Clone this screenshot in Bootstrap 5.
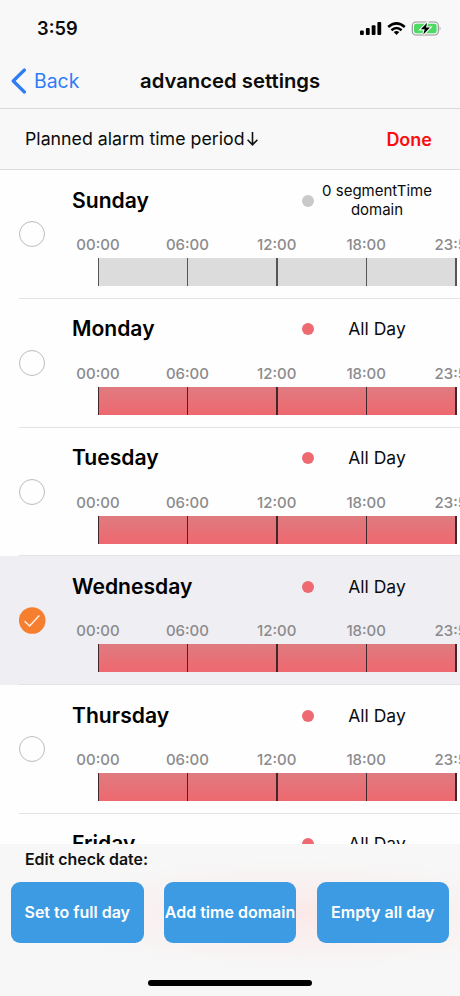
<!DOCTYPE html>
<html lang="en">
<head>
<meta charset="utf-8">
<meta name="viewport" content="width=device-width, initial-scale=1">
<title>advanced settings</title>
<link href="https://cdn.jsdelivr.net/npm/bootstrap@5.3.0/dist/css/bootstrap.min.css" rel="stylesheet">
<style>
  body { font-family: Inter, "Liberation Sans", sans-serif; color: #0b0b0b; background: #fefefe; }
  .screen { width: 460px; height: 996px; }
  .bar-bg { background: #f8f8f8; }
  .status { height: 56px; padding: 0 19px 0 37px; }
  .clock { font-size: 18.3px; font-weight: 600; line-height: 22px; }
  .titlebar { height: 53px; padding-bottom: 1px; border-bottom: 1px solid #d9d9d9; padding-left: 11px; }
  .back { width: 129px; gap: 7px; font-size: 19.4px; color: #2f7cf6; }
  .page-title { font-size: 20.3px; font-weight: 600; }
  .subbar { height: 61px; border-bottom: 1px solid #dcdcdc; padding: 0 28px 0 25px; font-size: 17.75px; }
  .done { color: #fb0d0d; font-weight: 600; font-size: 18px; }
  .day { height: 128.75px; }
  .day.picked { background-color: #efeef3; }
  .check-col { width: 72px; padding-left: 19px; }
  .ring { width: 26px; height: 26px; border: 1px solid #bcbcbc; }
  .day-wrap { background: linear-gradient(#e3e3e5, #e3e3e5) 19px 100% / 100% 1px no-repeat; }
  .head { height: 62px; padding-bottom: 1px; }
  .day-name { width: 230px; font-size: 21.1px; font-weight: 600; color: #000; }
  .dot { width: 12px; height: 12px; background: #ec6a70; }
  .dot.off { background: #c9c9c9; }
  .state { width: 126px; font-size: 17.5px; line-height: 22px; }
  .state.long { font-size: 15px; line-height: 18.5px; }
  .hours { height: 26px; margin-left: -18.7px; font-size: 15px; font-weight: 500; color: #8b8b8d; line-height: 26px; }
  .hours span { width: 89.4px; }
  .track { width: 359px; height: 28px; margin-left: 25.5px; background: linear-gradient(#df7b80, #ee686f); }
  .track.off { background: #dcdcdc; }
  .track i { width: 1.5px; background: #40272b; }
  .track.off i { background: #555; }
  .tools { height: 152px; background:
      radial-gradient(ellipse 260px 55px at 300px 70px, #fbe9e9, rgba(251,236,236,0)), #f7f7f7; }
  .tools-label { height: 38px; padding: 5px 0 0 25px; font-size: 15.9px; font-weight: 600; line-height: 22px; color: #111; }
  .tool-row { padding: 0 11px; }
  .tool { width: 132.5px; height: 61px; border-radius: 9px; background: #3c9be3; color: #fff; font-size: 16px; font-weight: 600; }
  .tool span { display: block; margin-top: -1px; }
  .home { width: 164px; height: 6px; background: #000; margin-top: 37px; }
</style>
</head>
<body>
<div class="screen d-flex flex-column overflow-hidden">
  <header class="bar-bg flex-shrink-0">
    <div class="status d-flex align-items-center justify-content-between">
      <div class="clock">3:59</div>
      <svg width="84" height="20" viewBox="0 0 84 20">
        <g fill="#000"><rect x="3" y="12.5" width="3.8" height="4.5" rx="1"/><rect x="8.9" y="10" width="3.8" height="7" rx="1"/><rect x="14.7" y="7.3" width="3.8" height="9.7" rx="1"/><rect x="20.4" y="4" width="3.8" height="13" rx="1"/></g>
        <g fill="none" stroke="#000" stroke-width="2.5"><path d="M31.2 9Q39.5 1.8 47.8 9"/><path d="M34.4 12.2Q39.5 7.8 44.6 12.2"/></g>
        <path d="M36.7 14Q39.5 11.8 42.3 14L39.5 17Z"/>
        <rect x="55.3" y="4" width="26" height="13" rx="3.7" fill="none" stroke="#929292" stroke-width="1.1"/>
        <rect x="57" y="5.7" width="22.6" height="9.6" rx="2.2" fill="#4cda64"/>
        <path d="M82.7 8.3q1.5 2.2 0 4.4z" fill="#929292"/>
        <path d="M70.2 4.7L63.8 11.3H67.7L66.3 16.4L73 9.5H69Z" stroke="#f8f8f8" stroke-width="2.2" paint-order="stroke"/>
      </svg>
    </div>
    <div class="titlebar d-flex align-items-center">
      <div class="back d-flex align-items-center">
        <svg width="16" height="26" viewBox="0 0 16 26" fill="none" stroke="#2f7cf6" stroke-width="3.2" stroke-linecap="round" stroke-linejoin="round"><path d="M13.4 2L2.2 13L13.4 24"/></svg>
        <span>Back</span>
      </div>
      <div class="page-title">advanced settings</div>
    </div>
    <div class="subbar d-flex align-items-center justify-content-between">
      <span class="d-flex align-items-center"><span>Planned alarm time period</span><svg width="14" height="18" viewBox="0 0 14 18" fill="none" stroke="#111" stroke-width="1.6"><path d="M7.5 2V14.6M2.6 9.8L7.5 14.8L12.4 9.8"/></svg></span>
      <span class="done">Done</span>
    </div>
  </header>

  <main class="flex-grow-1 overflow-hidden">
    <section class="day day-wrap d-flex">
      <div class="check-col flex-shrink-0 d-flex align-items-center"><div class="ring rounded-circle"></div></div>
      <div class="flex-shrink-0">
        <div class="head d-flex align-items-center"><div class="day-name">Sunday</div><div class="dot off rounded-circle"></div><div class="state long text-center">0 segmentTime<br>domain</div></div>
        <div class="hours d-flex text-center"><span>00:00</span><span>06:00</span><span>12:00</span><span>18:00</span><span>23:59</span></div>
        <div class="track off d-flex justify-content-between"><i></i><i></i><i></i><i></i><i></i></div>
      </div>
    </section>
    <section class="day day-wrap d-flex">
      <div class="check-col flex-shrink-0 d-flex align-items-center"><div class="ring rounded-circle"></div></div>
      <div class="flex-shrink-0">
        <div class="head d-flex align-items-center"><div class="day-name">Monday</div><div class="dot rounded-circle"></div><div class="state text-center">All Day</div></div>
        <div class="hours d-flex text-center"><span>00:00</span><span>06:00</span><span>12:00</span><span>18:00</span><span>23:59</span></div>
        <div class="track d-flex justify-content-between"><i></i><i></i><i></i><i></i><i></i></div>
      </div>
    </section>
    <section class="day day-wrap d-flex">
      <div class="check-col flex-shrink-0 d-flex align-items-center"><div class="ring rounded-circle"></div></div>
      <div class="flex-shrink-0">
        <div class="head d-flex align-items-center"><div class="day-name">Tuesday</div><div class="dot rounded-circle"></div><div class="state text-center">All Day</div></div>
        <div class="hours d-flex text-center"><span>00:00</span><span>06:00</span><span>12:00</span><span>18:00</span><span>23:59</span></div>
        <div class="track d-flex justify-content-between"><i></i><i></i><i></i><i></i><i></i></div>
      </div>
    </section>
    <section class="day day-wrap picked d-flex">
      <div class="check-col flex-shrink-0 d-flex align-items-center">
        <svg width="27" height="27" viewBox="0 0 27 27"><circle cx="13.2" cy="13.5" r="13.3" fill="#f67f2f"/><path d="M5.6 14.2L10.6 19L20.3 8.6" fill="none" stroke="#fff0e4" stroke-width="1.5"/></svg>
      </div>
      <div class="flex-shrink-0">
        <div class="head d-flex align-items-center"><div class="day-name">Wednesday</div><div class="dot rounded-circle"></div><div class="state text-center">All Day</div></div>
        <div class="hours d-flex text-center"><span>00:00</span><span>06:00</span><span>12:00</span><span>18:00</span><span>23:59</span></div>
        <div class="track d-flex justify-content-between"><i></i><i></i><i></i><i></i><i></i></div>
      </div>
    </section>
    <section class="day day-wrap d-flex">
      <div class="check-col flex-shrink-0 d-flex align-items-center"><div class="ring rounded-circle"></div></div>
      <div class="flex-shrink-0">
        <div class="head d-flex align-items-center"><div class="day-name">Thursday</div><div class="dot rounded-circle"></div><div class="state text-center">All Day</div></div>
        <div class="hours d-flex text-center"><span>00:00</span><span>06:00</span><span>12:00</span><span>18:00</span><span>23:59</span></div>
        <div class="track d-flex justify-content-between"><i></i><i></i><i></i><i></i><i></i></div>
      </div>
    </section>
    <section class="day d-flex">
      <div class="check-col flex-shrink-0"></div>
      <div class="head d-flex align-items-center flex-shrink-0"><div class="day-name">Friday</div><div class="dot rounded-circle"></div><div class="state text-center">All Day</div></div>
    </section>
  </main>

  <footer class="tools flex-shrink-0">
    <div class="tools-label">Edit check date:</div>
    <div class="tool-row d-flex justify-content-between">
      <button class="tool btn border-0 p-0 text-nowrap"><span>Set to full day</span></button>
      <button class="tool btn border-0 p-0 text-nowrap"><span>Add time domain</span></button>
      <button class="tool btn border-0 p-0 text-nowrap"><span>Empty all day</span></button>
    </div>
    <div class="home rounded-pill mx-auto"></div>
  </footer>
</div>
<script src="https://cdn.jsdelivr.net/npm/bootstrap@5.3.0/dist/js/bootstrap.bundle.min.js"></script>
</body>
</html>
